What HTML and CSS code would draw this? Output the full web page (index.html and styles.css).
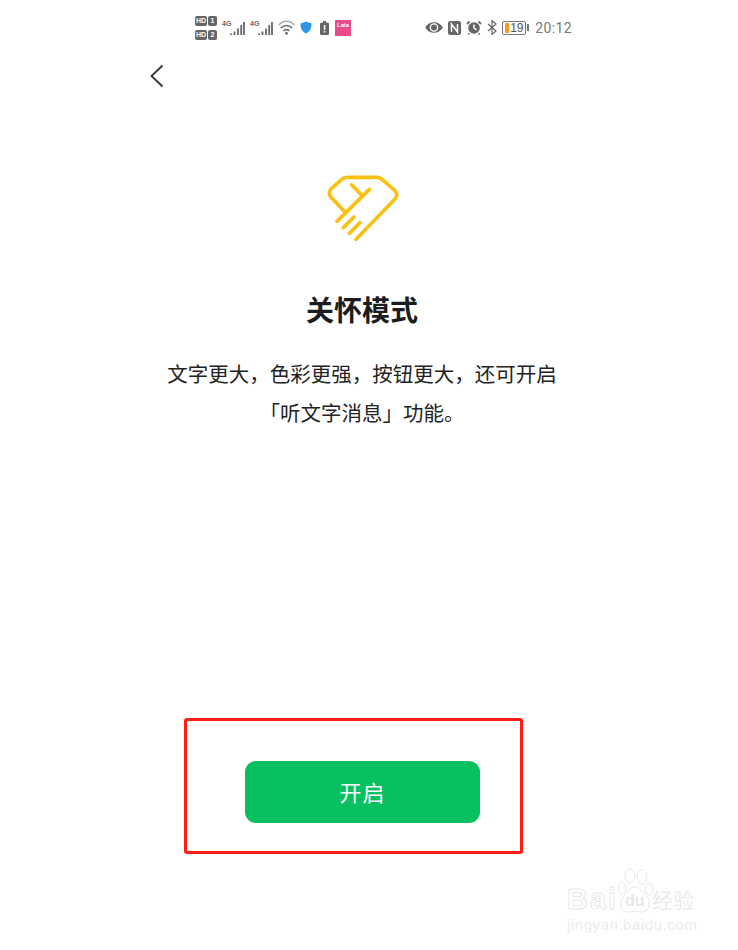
FILE: index.html
```html
<!DOCTYPE html>
<html lang="zh-CN">
<head>
<meta charset="utf-8">
<title>关怀模式</title>
<link rel="stylesheet" href="styles.css">
</head>
<body>
<main class="page">
  <header class="status">
    <div class="status-group left">
      <div class="sims">
        <div class="sim"><span class="hd">HD</span><span class="simno">1</span></div>
        <div class="sim"><span class="hd">HD</span><span class="simno">2</span></div>
      </div>
      <div class="signal"><span class="net">4G</span>
        <svg width="15" height="15" viewBox="0 0 15 15"><path class="bars" d="M1 14v-1.500M4.500 14v-3.500M8 14v-6.500M11.200 14v-10M14 14v-13"/></svg>
      </div>
      <div class="signal"><span class="net">4G</span>
        <svg width="15" height="15" viewBox="0 0 15 15"><path class="bars" d="M1 14v-1.500M4.500 14v-3.500M8 14v-6.500M11.200 14v-10M14 14v-13"/></svg>
      </div>
      <svg class="wifi" width="17" height="15" viewBox="0 0 17 15"><path class="wifi-far" d="M.8 5c4.500-5 11-5 15.400 0"/><path class="wifi-near" d="M3 8c3.200-3.400 7.800-3.400 11 0M5.500 11c1.800-1.800 4.200-1.800 6 0"/><circle cx="8.500" cy="13.300" r="1.400" fill="#666"/></svg>
      <svg class="shield" width="12" height="13" viewBox="0 0 12 13"><path d="M6 .5 11.500 2.500c0 5-1.500 8-5.500 10C2 10.500.5 7.500.5 2.500z" fill="#2b95ea"/></svg>
      <svg class="cell" width="9" height="14" viewBox="0 0 9 14"><rect x="0" y="1.500" width="9" height="12.500" rx="1.500" fill="#666"/><rect x="3" y="0" width="3" height="2" fill="#666"/><rect x="3.800" y="4" width="1.500" height="5" fill="#fff"/><rect x="3.800" y="10" width="1.500" height="1.500" fill="#fff"/></svg>
      <div class="app-badge">Lala</div>
    </div>
    <div class="status-group right">
      <svg width="18" height="13" viewBox="0 0 18 13"><path d="M.2 6.500C4 -.5 14 -.5 17.800 6.500 14 13.500 4 13.500.2 6.500z" fill="#666"/><circle cx="9" cy="6.500" r="4.300" fill="#fff"/><circle cx="9" cy="6.500" r="3" fill="#666"/></svg>
      <svg width="13" height="14" viewBox="0 0 13 14"><rect width="13" height="14" rx="2.500" fill="#666"/><path class="nfc" d="M3.500 11V3l6 8V3"/></svg>
      <svg width="16" height="15" viewBox="0 0 16 15"><circle cx="8" cy="8" r="5.800" fill="#666"/><path class="clock" d="M8 4.500V8l2.500 2"/><path class="ears" d="M1 4 3.500 1.500M15 4l-2.500-2.500M3.500 13.500l-1 1M12.500 13.500l1 1"/></svg>
      <svg width="10" height="15" viewBox="0 0 10 15"><path class="bt" d="M1 4l8 7-4 3.500v-14L9 4l-8 7"/></svg>
      <div class="battery"><div class="battery-body"><span class="battery-fill"></span><span class="battery-num">19</span></div><span class="battery-cap"></span></div>
      <span class="clock-text">20:12</span>
    </div>
  </header>

  <nav class="nav">
    <svg width="14" height="24" viewBox="0 0 14 24"><path class="back" d="M12.500 1.500 1.500 12l11 10.500"/></svg>
  </nav>

  <section class="intro">
    <svg class="logo" width="105" height="95" viewBox="0 0 315 285">
      <path d="M105 156 63 112q-10-13 1-26L95 58q6-6 15-6h92q8 0 15 7l38 33q11 12 0 25L138 238M178 88 81 184M125 75l31 31M132 171l-32 32M150 188l-32 32"/>
    </svg>
    <h1 class="title">关怀模式</h1>
    <p class="desc">文字更大，色彩更强，按钮更大，还可开启<br>「听文字消息」功能。</p>
  </section>

  <section class="action">
    <button class="primary">开启</button>
  </section>
</main>

<aside class="watermark">
  <div class="wm-top">
    <span class="wm-bai">Bai</span>
    <svg class="wm-paw" width="38" height="48" viewBox="0 0 38 48">
      <ellipse cx="6" cy="20" rx="4" ry="6"/><ellipse cx="14" cy="8" rx="5" ry="7"/><ellipse cx="26" cy="9" rx="5" ry="7"/><ellipse cx="33" cy="21" rx="4" ry="6"/><path d="M19 19c-5 0-7 5-11 9-6 5-4 16 4 16 3 0 5-1 7-1s4 1 7 1c8 0 10-11 4-16-4-4-6-9-11-9z"/>
    </svg>
    <span class="wm-du">du</span>
    <span class="wm-cn">经验</span>
  </div>
  <div class="wm-url">jingyan.baidu.com</div>
</aside>
</body>
</html>
```

FILE: styles.css
```css
* { box-sizing: border-box; }
html, body { margin: 0; padding: 0; background: #fff; }
body {
  width: 738px;
  height: 950px;
  overflow: hidden;
  position: relative;
  font-family: "Noto Sans CJK SC", "Liberation Sans", sans-serif;
}
.page { display: flex; flex-direction: column; align-items: center; height: 950px; }

.status {
  width: 738px;
  height: 50px;
  padding: 5px 166px 0 195px;
  display: flex;
  justify-content: space-between;
  align-items: center;
  color: #666;
}
.status-group { display: flex; align-items: center; }
.left { gap: 5px; }
.right { gap: 5px; }
.sims { display: flex; flex-direction: column; gap: 4px; }
.sim { display: flex; gap: 1px; }
.hd, .simno {
  background: #666;
  color: #fff;
  font: 700 7px/10px "Liberation Sans", sans-serif;
  border-radius: 2px;
  text-align: center;
}
.hd { width: 12px; }
.simno { width: 9px; }
.signal { display: flex; align-items: flex-start; width: 23px; position: relative; }
.net { font: 700 7px/8px "Liberation Sans", sans-serif; color: #666; width: 8px; flex: none; }
.bars { stroke: #666; stroke-width: 1.800; fill: none; }
.signal svg { margin-top: 1px; flex: none; }
.wifi-far { stroke: #aaa; stroke-width: 1.500; fill: none; }
.wifi-near { stroke: #666; stroke-width: 1.500; fill: none; }
.cell { margin-left: 3px; }
.app-badge {
  width: 16px;
  height: 16px;
  margin-left: 1px;
  background: #ea4c89;
  color: #fff;
  font: 700 6px/11px "Liberation Sans", sans-serif;
  text-align: center;
  overflow: hidden;
}
.nfc { stroke: #fff; stroke-width: 1.500; fill: none; }
.clock { stroke: #fff; stroke-width: 1.500; fill: none; }
.ears { stroke: #666; stroke-width: 1.800; fill: none; }
.bt { stroke: #666; stroke-width: 1.200; fill: none; }
.battery { display: flex; align-items: center; gap: 1px; }
.battery-body {
  width: 24px;
  height: 14px;
  border: 1px solid #777;
  border-radius: 2px;
  display: flex;
  align-items: center;
  padding-left: 2px;
  gap: 1px;
}
.battery-fill { width: 4px; height: 10px; background: #f59a23; }
.battery-num { font: 12px/12px "Liberation Sans", sans-serif; color: #555; }
.battery-cap { width: 2px; height: 7px; background: #777; }
.clock-text { font: 14px/16px "Roboto", sans-serif; color: #777; margin-left: 1px; letter-spacing: .4px; }

.nav { width: 738px; height: 37px; padding: 14px 0 0 150px; }
.nav svg { display: block; }
.back { stroke: #333; stroke-width: 1.800; fill: none; }

.intro { display: flex; flex-direction: column; align-items: center; padding: 73px 14px 0 0; }
.logo { display: block; }
.logo path {
  stroke: #fac113;
  stroke-width: 11;
  stroke-linecap: round;
  stroke-linejoin: round;
  fill: none;
}
.title {
  margin: 34px 0 0;
  font-size: 28px;
  line-height: 40px;
  font-weight: 700;
  color: #1c1c1c;
}
.desc {
  margin: 25px 0 0;
  font-size: 20.500px;
  line-height: 39px;
  color: #222;
  text-align: center;
  white-space: nowrap;
}

.action {
  margin-top: 286px;
  margin-right: 31px;
  width: 339px;
  height: 136px;
  border: 3px solid #ff1f14;
  border-radius: 3px;
  display: flex;
  justify-content: center;
  padding: 40px 0 0 18px;
}
.primary {
  width: 235px;
  height: 62px;
  border: 0;
  border-radius: 11px;
  background: #07c160;
  color: #fff;
  font: 400 22px/58px "Noto Sans CJK SC", sans-serif;
  padding: 0 0 3px;
  letter-spacing: 1px;
}

.watermark {
  position: absolute;
  left: 567px;
  top: 868px;
  width: 134px;
}
.wm-top { height: 46px; position: relative; }
.wm-bai { position: absolute; left: 0; bottom: 0; font: 700 29px/30px "Liberation Sans", sans-serif; color: transparent; -webkit-text-stroke: 1px #e8e8e8; letter-spacing: 2px; }
.wm-paw { position: absolute; left: 49px; top: 0; }
.wm-paw ellipse, .wm-paw path { fill: #fff; stroke: #e8e8e8; stroke-width: 1; }
.wm-du { position: absolute; left: 58px; bottom: 5px; font: 700 16px/16px "Liberation Sans", sans-serif; color: #e8e8e8; }
.wm-cn { position: absolute; left: 85px; bottom: 2px; font-size: 21px; line-height: 26px; color: #ebebeb; }
.wm-url { font: 15px/18px "Liberation Sans", sans-serif; color: #ebebeb; letter-spacing: .55px; white-space: nowrap; margin-top: 2px; }
```
